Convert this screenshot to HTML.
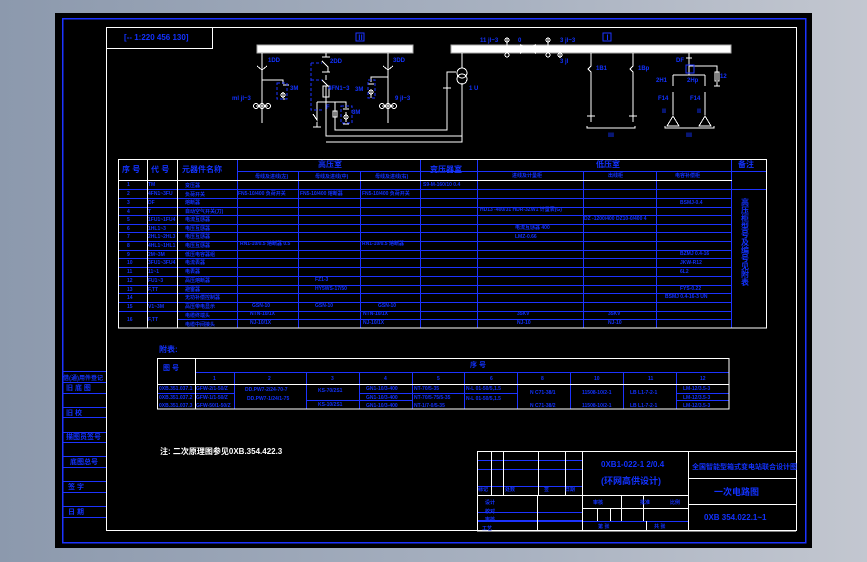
<!DOCTYPE html>
<html><head><meta charset="utf-8"><style>
html,body{margin:0;padding:0;width:867px;height:562px;overflow:hidden;background:linear-gradient(90deg,#8c99ad 0%,#a9b2c1 60%,#c3c7d0 100%);}
svg{position:absolute;left:0;top:0}
text{font-family:"Liberation Sans","Noto Sans CJK SC",sans-serif;fill:#1232ff;font-weight:bold}
.w{stroke:#fff;fill:none;stroke-width:1}
.b{stroke:#1c33ff;fill:none;stroke-width:1}
.bd{stroke:#1c33ff;fill:none;stroke-width:1;stroke-dasharray:3 2}
</style></head><body>
<svg width="867" height="562" viewBox="0 0 867 562" shape-rendering="crispEdges">
<rect x="55" y="13" width="757" height="535" fill="#000"/>
<rect x="62.5" y="18.5" width="743" height="524" class="b" style="stroke-width:1.5"/>
<rect x="106.5" y="27.5" width="690" height="503" class="w"/>
<path class="w" d="M106 48.5H212.5V27"/>
<text x="124" y="40" font-size="8">[-- 1:220 456 130]</text>

<rect x="257" y="45" width="156" height="8" fill="#fff" stroke="#aaa"/>
<rect x="451" y="45" width="280" height="8" fill="#fff" stroke="#aaa"/>
<rect x="356" y="33" width="8" height="8" class="b"/><text x="357" y="40" font-size="7">Ⅱ</text>
<rect x="603" y="33" width="8" height="8" class="b"/><text x="604" y="40" font-size="7">Ⅰ</text>

<g class="w">
<path d="M262 53V123M257 66l5 4 5-4M262 80H283V84M256 106h12M262 118v3"/>
<circle cx="262" cy="106" r="2.5"/><circle cx="256" cy="106" r="2.5"/><circle cx="268" cy="106" r="2.5"/>
<path d="M283 85h6M283 92v6M280 99h6"/><circle cx="283" cy="95" r="2"/>
<path d="M326 53V57M322 57h8M322 61l6 6V72M322 72h8M326 75V80M322 80l6 6M326 86v50H462V83"/>
<rect x="323" y="86" width="6" height="11"/>
<path d="M317 102H346V108M317 102V120l-4-6M317 122v5M313 127h8M335 102V130H447V72H456"/>
<rect x="333" y="111" width="4" height="6"/>
<path d="M343 109h6M346 112v10M343 124h6"/><circle cx="346" cy="117" r="2"/>
<path d="M388 53V123M383 66l5 4 5-4M388 77H371V82M382 106h12M388 118v3M368 84h6M371 90v8"/>
<circle cx="371" cy="92" r="2"/><circle cx="388" cy="106" r="2.5"/><circle cx="382" cy="106" r="2.5"/><circle cx="394" cy="106" r="2.5"/>
<path d="M326 142H462V84"/>
<circle cx="462" cy="73" r="5"/><circle cx="462" cy="79" r="5"/>
<path d="M462 53V68M447 72V88M443 88h8"/>
</g>
<rect x="277" y="83" width="10" height="16" class="bd"/>
<rect x="341" y="106" width="11" height="17" class="bd"/>
<rect x="368" y="80" width="7" height="18" class="bd"/>
<path class="bd" d="M311 63H322M311 63V110H322M311 80H322"/>
<g font-size="6">
<text x="268" y="62">1DD</text><text x="290" y="90">3M</text><text x="232" y="100">ml jl~3</text>
<text x="330" y="63">2DD</text><text x="328" y="90">4FN1~3</text><text x="355" y="91">3M</text><text x="326" y="109">F</text><text x="352" y="114">3M</text>
<text x="393" y="62">3DD</text><text x="395" y="100">9 jl~3</text><text x="469" y="90">1 U</text>
</g>

<g class="w">
<path d="M507 38v14M548 38v14M560 52v6"/>
<circle cx="507" cy="40" r="2"/><circle cx="507" cy="55" r="2"/><circle cx="548" cy="40" r="2"/><circle cx="548" cy="55" r="2"/><circle cx="560" cy="55" r="2"/>
<path d="M591 53V66l-3 3 3 3V122M587 116h8M633 53V66l-3 3 3 3V122M629 116h8"/>
<path d="M587 126v2h48v-2M665 126v2h49v-2"/>
<path d="M689 53V75M686 58h6M689 66H717V80M715 72h4v9h-4zM717 82v4M714 86h6M673 75H705M673 75V86M705 75V86M673 92V115M705 92V115"/>
<path d="M667 126l6-10 6 10zM699 126l6-10 6 10z"/>
</g>
<path d="M520 44l8 4-8 6zm16 0l-8 4 8 6z" fill="#fff"/>
<rect x="686" y="65" width="8" height="8" class="b"/>
<g font-size="6">
<text x="480" y="42">11 jl~3</text><text x="518" y="42">0</text><text x="560" y="42">3 jl~3</text><text x="560" y="63">3 jl</text>
<text x="596" y="70">1B1</text><text x="638" y="70">1Bp</text><text x="608" y="137">Ⅲ</text>
<text x="676" y="62">DF</text><text x="720" y="78">12</text><text x="656" y="82">2H1</text><text x="687" y="82">2Hp</text>
<text x="658" y="100">F14</text><text x="690" y="100">F14</text><text x="661" y="113">Ⅱ</text><text x="696" y="113">Ⅱ</text><text x="686" y="137">Ⅲ</text>
</g>

<g class="b">
<path d="M237 171.5H478M478 171.5H732"/>
<path d="M118 189.5H767M118 198.5H732M118 207.5H732M118 215.5H732M118 224.5H732M118 232.5H732M118 241.5H732M118 250.5H732M118 258.5H732M118 267.5H732M118 276.5H732M118 285.5H732M118 293.5H732M118 302.5H732M118 311.5H732M177 319.5H732" />
<path d="M237.5 159V328M298.5 171V328M360.5 171V328M420.5 159V328M477.5 159V328M583.5 171V328M656.5 171V328M731.5 159V328M731 171.5H767"/>
</g>
<path class="w" d="M118 180.5H732M147.5 159V328M177.5 159V328"/>
<rect x="118.5" y="159.5" width="648" height="168.5" class="w"/>
<g font-size="8">
<text x="122" y="172">序 号</text><text x="151" y="172">代 号</text><text x="182" y="172">元器件名称</text>
<text x="318" y="167">高压室</text><text x="430" y="172">变压器室</text><text x="596" y="167">低压室</text><text x="738" y="167">备注</text>
</g>
<g font-size="5">
<text x="255" y="178">母线及进线(左)</text><text x="315" y="178">母线及进线(中)</text><text x="375" y="178">母线及进线(右)</text>
<text x="512" y="177">进线及计量柜</text><text x="608" y="177">出线柜</text><text x="675" y="177">电容补偿柜</text>
<text x="127" y="186">1</text><text x="127" y="195">2</text><text x="127" y="204">3</text><text x="127" y="213">4</text><text x="127" y="221">5</text><text x="127" y="230">6</text><text x="127" y="238">7</text><text x="127" y="247">8</text><text x="127" y="256">9</text><text x="127" y="264">10</text><text x="127" y="273">11</text><text x="127" y="282">12</text><text x="127" y="291">13</text><text x="127" y="299">14</text><text x="127" y="308">15</text><text x="127" y="321">16</text>
<text x="148" y="186">TM</text><text x="148" y="195">4FN1~3FU</text><text x="148" y="204">DF</text><text x="148" y="213">T</text><text x="148" y="221">1FU1~1FU4</text><text x="148" y="230">1HL1~3</text><text x="148" y="238">2HL1~2HL3</text><text x="148" y="247">4HL1~1HL1</text><text x="148" y="256">2M~3M</text><text x="148" y="264">3FU1~3FU4</text><text x="148" y="273">11~1</text><text x="148" y="282">FU1~3</text><text x="148" y="291">F,TT</text><text x="148" y="308">V1~3M</text><text x="148" y="321">F,TT</text>
<text x="185" y="187">变压器</text><text x="185" y="196">负荷开关</text><text x="185" y="204">熔断器</text><text x="185" y="213">自动空气开关(刀)</text><text x="185" y="221">电流互感器</text><text x="185" y="230">电压互感器</text><text x="185" y="238">电压互感器</text><text x="185" y="247">电压互感器</text><text x="185" y="256">低压电容器组</text><text x="185" y="264">电流表器</text><text x="185" y="273">电表器</text><text x="185" y="282">高压熔断器</text><text x="185" y="291">避雷器</text><text x="185" y="299">无功补偿控制器</text><text x="185" y="308">高压带电显示</text><text x="185" y="317">电缆终端头</text><text x="185" y="326">电缆中间接头</text>
<text x="238" y="195">FN5-10/400 负荷开关</text><text x="300" y="195">FN5-10/400 熔断器</text><text x="362" y="195">FN5-10/400 负荷开关</text>
<text x="423" y="186">S9-M-160/10 0.4</text>
<text x="480" y="211">HD13 -400/31 HDR-3ZW1 计量表(G)</text><text x="584" y="220">DZ -1200/400 DZ10-0/400 4</text>
<text x="515" y="229">电流互感器 400</text><text x="515" y="238">LMZ-0.66</text>
<text x="680" y="204">BSMJ-0.4</text>
<text x="240" y="245">RN1-10/0.5 熔断器 0.5</text><text x="362" y="245">RN1-10/0.5 熔断器</text>
<text x="680" y="255">BZMJ 0.4-16</text><text x="680" y="264">JKW-R12</text><text x="680" y="273">6L2</text>
<text x="315" y="281">FZ1-3</text><text x="315" y="290">HY5WS-17/50</text>
<text x="680" y="290">FYS-0.22</text><text x="665" y="298">BSMJ 0.4-16-3 UN</text>
<text x="252" y="307">GSN-10</text><text x="315" y="307">GSN-10</text><text x="378" y="307">GSN-10</text>
<text x="250" y="315">NTN-10/1X</text><text x="363" y="315">NTN-10/1X</text><text x="517" y="315">35KV</text><text x="608" y="315">35KV</text>
<text x="250" y="324">NJ-10/1X</text><text x="363" y="324">NJ-10/1X</text><text x="517" y="324">NJ-10</text><text x="608" y="324">NJ-10</text>
</g>
<text font-size="8" writing-mode="tb" x="745" y="198">高压柜型号及编号见附表</text>

<text x="159" y="352" font-size="8">附表:</text>
<g class="b">
<path d="M195 372.5H729M195.5 372V409M234.5 372V409M306.5 372V409M359.5 372V409M412.5 372V409M464.5 372V409M517.5 372V409M570.5 372V409M623.5 372V409M676.5 372V409"/>
<path d="M157 393.5H234M306 400.5H412M359 393.5H464M676 393.5H729M676 400.5H729M464 393.5H517"/>
</g>
<path class="w" d="M157 384.5H729M195.5 358V409"/>
<rect x="157.5" y="358.5" width="571.5" height="50.5" class="w"/>
<g font-size="7"><text x="163" y="370">图 号</text><text x="470" y="367">序 号</text></g>
<g font-size="5">
<text x="213" y="380">1</text><text x="268" y="380">2</text><text x="331" y="380">3</text><text x="384" y="380">4</text><text x="437" y="380">5</text><text x="490" y="380">6</text><text x="541" y="380">8</text><text x="594" y="380">10</text><text x="648" y="380">11</text><text x="700" y="380">12</text>
<text x="159" y="390">0XB.351.037.1</text><text x="159" y="399">0XB.351.037.2</text><text x="159" y="407">0XB.351.037.3</text>
<text x="196" y="390">GFW-2/1-50/Z</text><text x="196" y="399">GFW-1/1-50/Z</text><text x="196" y="407">GFW-50/1-50/Z</text>
<text x="245" y="391">DD.PW7-2/24-70-7</text><text x="247" y="400">DD.PW7-1/24/1-75</text>
<text x="318" y="392">KS-70/2S1</text><text x="318" y="406">KS-10/2S1</text>
<text x="366" y="390">GN1-10/3-400</text><text x="366" y="399">GN1-10/3-400</text><text x="366" y="407">GN1-10/3-400</text>
<text x="414" y="390">NT-70/5-35</text><text x="414" y="399">NT-70/5-75/5-35</text><text x="414" y="407">NT-1/7-0/5-35</text>
<text x="466" y="390">N-L 01-50/5,1.5</text><text x="466" y="400">N-L 01-50/5,1.5</text>
<text x="530" y="394">N C71-38/1</text><text x="530" y="407">N C71-38/2</text>
<text x="582" y="394">11508-10/2-1</text><text x="582" y="407">11508-10/2-1</text>
<text x="630" y="394">LB L1-7-2-1</text><text x="630" y="407">LB L1-7-2-1</text>
<text x="683" y="390">LM-12/3.5-3</text><text x="683" y="399">LM-12/3.5-3</text><text x="683" y="407">LM-12/3.5-3</text>
</g>
<text x="160" y="454" font-size="8" style="fill:#fff">注: 二次原理图参见0XB.354.422.3</text>

<g class="b"><path d="M62 371.5H106M62 382.5H106M62 393.5H106M62 407.5H106M62 417.5H106M62 432.5H106M62 442.5H106M62 456.5H106M62 467.5H106M62 481.5H106M62 492.5H106M62 506.5H106M62 517.5H106"/></g>
<g font-size="7"><text x="63" y="380" font-size="6">借(通)用件登记</text><text x="66" y="390">旧 底 图</text><text x="66" y="415">旧  校</text><text x="66" y="439">描图员签号</text><text x="70" y="464">底图总号</text><text x="68" y="489">签 字</text><text x="68" y="514">日 期</text></g>

<g class="b"><path d="M477 460.5H582M477 469.5H582M477 486.5H582M477 521.5H688M477 520.5H582M477 512.5H582"/></g>
<g class="w">
<path d="M477.5 451V531M477 451.5H796M491.5 451V495M503.5 451V495M538.5 451V495M565.5 451V495M582.5 451V531M688.5 451V531M477 495.5H688M477 531H796M688 478.5H796M688 504.5H796"/>
<path d="M537.5 495V531M582 508.5H688M621.5 495V521M643.5 495V521M597.5 508V521M610.5 508V521M646.5 521V531"/>
</g>
<g font-size="5"><text x="478" y="491">标记</text><text x="505" y="491">处数</text><text x="544" y="491">签</text><text x="565" y="491">日期</text><text x="593" y="504">审核</text><text x="640" y="504">批准</text><text x="670" y="504">比例</text><text x="485" y="504">设计</text><text x="485" y="513">校对</text><text x="485" y="521">审核</text><text x="482" y="530">工艺</text><text x="598" y="528">第  张</text><text x="654" y="528">共  张</text></g>
<text x="601" y="467" font-size="8">0XB1-022-1 2/0.4</text>
<text x="601" y="484" font-size="9">(环网高供设计)</text>
<text x="692" y="469" font-size="7">全国智能型箱式变电站联合设计图</text>
<text x="714" y="495" font-size="9">一次电路图</text>
<text x="704" y="520" font-size="8">0XB 354.022.1~1</text>
</svg>
</body></html>
